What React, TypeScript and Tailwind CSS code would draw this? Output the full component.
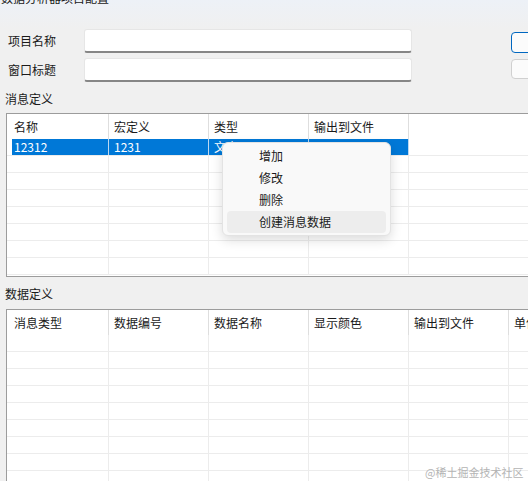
import React from "react";

interface Col {
  label: string;
  w: number;
}

const msgCols: Col[] = [
  { label: "名称", w: 102 },
  { label: "宏定义", w: 100 },
  { label: "类型", w: 100 },
  { label: "输出到文件", w: 100 },
];

const dataCols: Col[] = [
  { label: "消息类型", w: 102 },
  { label: "数据编号", w: 100 },
  { label: "数据名称", w: 100 },
  { label: "显示颜色", w: 100 },
  { label: "输出到文件", w: 100 },
  { label: "单位", w: 100 },
];

const menuItems = ["增加", "修改", "删除", "创建消息数据"];

function Grid({
  cols,
  rows,
  height,
  selected,
}: {
  cols: Col[];
  rows: number;
  height?: number;
  selected?: string[];
}) {
  return (
    <div
      className="ml-[6px] w-[560px] shrink-0 overflow-hidden border border-r-0 border-[#9c9c9c] bg-white"
      style={height ? { height } : undefined}
    >
      {/* header */}
      <div className="flex h-[25px]">
        {cols.map((c, i) => (
          <div
            key={c.label}
            className={`flex shrink-0 items-center border-r border-[#dedede] text-[12px] leading-[16px] text-[#1a1a1a] ${
              i === 0 ? "pl-[7px]" : "pl-[5px]"
            }`}
            style={{ width: c.w }}
          >
            {c.label}
          </div>
        ))}
      </div>

      {/* body */}
      {Array.from({ length: rows }).map((_, r) => {
        const sel = r === 0 && selected;
        return (
          <div key={r} className="flex h-[17px] border-b border-[#ececec]">
            {cols.map((c, i) => (
              <div
                key={c.label}
                className={`flex h-full shrink-0 border-r ${
                  sel ? "border-[#bcd8f1]" : "border-[#ececec]"
                }`}
                style={{ width: c.w }}
              >
                {sel ? (
                  <div
                    className={`flex h-full flex-1 items-center bg-[#0078d7] text-[12px] leading-[16px] text-white ${
                      i === 0 ? "ml-[5px] pl-[2px]" : "pl-[5px]"
                    }`}
                  >
                    {selected[i]}
                  </div>
                ) : null}
              </div>
            ))}
          </div>
        );
      })}
    </div>
  );
}

export default function App() {
  return (
    <div
      className="relative flex h-[481px] w-[528px] flex-col overflow-hidden bg-[#f0f0f0] text-[#1a1a1a]"
      style={{ fontFamily: '"Noto Sans CJK SC", "Noto Sans", sans-serif' }}
    >
      {/* title bar, cut off at the top */}
      <div className="h-[29px] shrink-0 bg-gradient-to-b from-[#edf1f7] to-[#f0f0f0]">
        <div className="-mt-[10px] pl-[1px] text-[12px] leading-[16px] text-[#1a1a1a]">
          数据分析器项目配置
        </div>
      </div>

      {/* form */}
      <div className="flex shrink-0">
        <div className="flex flex-col gap-[5px]">
          {["项目名称", "窗口标题"].map((l) => (
            <div key={l} className="flex h-[24px] items-center">
              <span className="w-[84px] pl-[8px] text-[12px] leading-[16px]">{l}</span>
              <div className="h-full w-[328px] rounded-[3px] border border-b-2 border-[#e6e6e6] border-b-[#868686] bg-white" />
            </div>
          ))}
        </div>
        <div className="ml-[99px] flex flex-col gap-[6px] pt-[3px]">
          <div className="h-[21px] w-[40px] rounded-[4px] border border-[#0067c0] bg-[#fbfbfb]" />
          <div className="h-[20px] w-[40px] rounded-[4px] border border-[#d0d0d0] bg-[#fbfbfb]" />
        </div>
      </div>

      <div className="mt-[9px] pl-[5px] text-[12px] leading-[16px]">消息定义</div>
      <div className="mt-[6px]">
        <Grid cols={msgCols} rows={8} height={164} selected={["12312", "1231", "文本", ""]} />
      </div>

      <div className="mt-[9px] pl-[5px] text-[12px] leading-[16px]">数据定义</div>
      <div className="mt-[7px]">
        <Grid cols={dataCols} rows={10} />
      </div>

      {/* context menu */}
      <div className="absolute left-[222px] top-[142px] flex w-[169px] flex-col rounded-[6px] border border-[#e3e3e3] bg-[#f9f9f9] py-[2px] shadow-[0_4px_12px_rgba(0,0,0,0.14)]">
        {menuItems.map((m, i) => (
          <div
            key={m}
            className={`mx-[4px] flex h-[22px] items-center rounded-[4px] pl-[32px] text-[12px] leading-[16px] text-[#1a1a1a] ${
              i === 3 ? "bg-[#ededed]" : ""
            }`}
          >
            {m}
          </div>
        ))}
      </div>

      {/* watermark */}
      <div className="absolute left-[425px] top-[464px] text-[11px] leading-[16px] text-[#b4b4b4]">
        @稀土掘金技术社区
      </div>
    </div>
  );
}
